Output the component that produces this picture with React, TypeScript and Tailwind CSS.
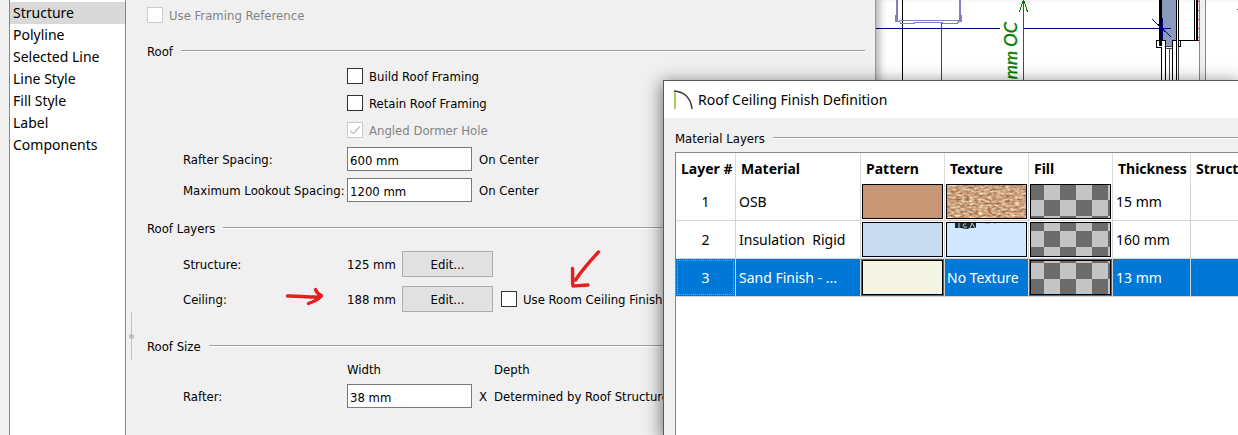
import { useState } from 'react'
import type { ReactNode } from 'react'

const panels = ['Structure', 'Polyline', 'Selected Line', 'Line Style', 'Fill Style', 'Label', 'Components']

const layers = [
  { id: 1, material: 'OSB', color: '#c79675', texture: 'osb', thickness: '15 mm', fill: 0 },
  { id: 2, material: 'Insulation  Rigid', color: '#c8dcf0', texture: 'rigid', thickness: '160 mm', fill: 1 },
  { id: 3, material: 'Sand Finish - ...', color: '#f5f5e6', texture: null, thickness: '13 mm', fill: 2 },
]

function Section({ title }: { title: string }) {
  return (
    <div className="flex h-4 items-center gap-2">
      <h2 className="pt-0.5 leading-4 whitespace-nowrap">{title}</h2>
      <div className="h-[2px] flex-1 border-t border-[#a0a0a0] bg-white" />
    </div>
  )
}

function Check({ label, checked = false, disabled = false }: { label: string; checked?: boolean; disabled?: boolean }) {
  const [on, setOn] = useState(checked)
  return (
    <label className={disabled ? 'flex h-4 items-center gap-[6px] text-[#838383]' : 'flex h-4 items-center gap-[6px]'}>
      <span className="grid size-4 shrink-0">
        <input
          type="checkbox"
          checked={on}
          disabled={disabled}
          onChange={(e) => setOn(e.target.checked)}
          className="col-start-1 row-start-1 size-4 appearance-none border border-[#333] bg-white disabled:border-[#ccc]"
        />
        {on && (
          <svg viewBox="0 0 16 16" className="pointer-events-none col-start-1 row-start-1 size-4" fill="none" stroke="#c4c4c4" strokeWidth="1.5">
            <path d="M3 8.5 6.3 11.5 13 4.5" />
          </svg>
        )}
      </span>
      <span className="pt-0.5 leading-4 whitespace-nowrap">{label}</span>
    </label>
  )
}

function Field({ id, value }: { id: string; value: string }) {
  return <input id={id} type="text" defaultValue={value} className="h-6 w-[125px] shrink-0 border border-[#7a7a7a] bg-white px-[2px] pt-0.5" />
}

function EditButton({ label }: { label: string }) {
  return (
    <button aria-label={label} className="h-[26px] w-[91px] shrink-0 border border-[#adadad] bg-[#e1e1e1] pt-0.5">
      Edit...
    </button>
  )
}

function Row({ children }: { children: ReactNode }) {
  return <div className="grid grid-cols-[164px_1fr] items-center pl-9 whitespace-nowrap">{children}</div>
}

// Hand drawn markup arrows over the form
function ArrowRight() {
  return (
    <svg className="absolute top-[286px] left-[285px] h-5 w-10" viewBox="0 0 40 20" fill="none" stroke="#e81e1e" strokeWidth="3.4" strokeLinecap="round" strokeLinejoin="round">
      <path d="M2.500 10C13 9.500 22 11.500 35 11M30.500 3.500C31.500 6.500 34 8.500 36.500 9.500C36 12 28 16 23.500 17.500" />
    </svg>
  )
}

function ArrowDown() {
  return (
    <svg className="absolute top-[248px] left-[568px] h-10 w-9" viewBox="0 0 36 40" fill="none" stroke="#e81e1e" strokeWidth="3.4" strokeLinecap="round" strokeLinejoin="round">
      <path d="M30.500 4C24 11 14 22 7.500 32M4.500 20.500C5 26 4 32 5 38C9 38 14 37 20 37" />
    </svg>
  )
}

function Plan() {
  return (
    <svg className="block h-[81px] w-[362px]" viewBox="1 0 362 81" fill="none" shapeRendering="crispEdges">
      <path d="M27.500 0V81" stroke="#000" />
      <path d="M66.500 22V81" stroke="#444" />
      <path d="M22 0V21M85 0V21" stroke="#8080c0" strokeWidth="2" />
      <path d="M20.500 15V21.500H24.500L26 23.500H39L40 22.500H67L68 23.500H82L84 21.500H86.500V15M24 20.500H84" stroke="#8080c0" />
      <path d="M1 28.500H125M149 28.500H296" stroke="#000080" />
      <path d="M148.500 0V81M148 1 144.500 12M149 1 152.500 12" stroke="#008000" />
      <text x="142" y="22" textAnchor="end" transform="rotate(-90 142 22)" fill="#008000" stroke="#008000" strokeWidth="0.4" className="font-['Lato'] text-lg italic">
        mm OC
      </text>
      <path d="M287 0H301V46H287Z" fill="#8a9cb9" />
      <path d="M285.500 0V46" stroke="#000" strokeWidth="3" />
      <path d="M301.500 0V46M303.500 0V46" stroke="#000" />
      <path d="M287.500 18V40M277 19 296 37M287 28.500H296" stroke="#000080" />
      <path d="M287 40.500H281.500V47.500H286.500M303 40.500H324M305.500 41V46.500H303" stroke="#000" />
      <path d="M287 41H291V81H287ZM298 41H301V81H298Z" fill="#fff" />
      <path d="M286.500 47V81M290.500 41V81M297.500 41V81M301.500 41V81M287 40.500H291M297 40.500H302" stroke="#000" />
      <path d="M291 46.500H297M291 48.500H297M294.500 49V81M303.500 47V81" stroke="#444" />
      <path d="M319.500 0V40" stroke="#000" />
      <path d="M322 0V40" stroke="#000" strokeWidth="2" />
      <path d="M323.500 1V40" stroke="#f00" strokeDasharray="1 8" />
      <path d="M324 0H331V81H324Z" fill="#f0f0f0" />
      <path d="M324.500 0V81M330.500 0V81" stroke="#828790" />
      <path d="M362 9H363" stroke="#555" />
    </svg>
  )
}

function Logo() {
  return (
    <svg className="h-5 w-[19px]" viewBox="0 0 19 20" fill="none">
      <path d="M1 2V19" stroke="#a9cf5a" strokeWidth="2" />
      <path d="M0 1C10 1.500 17 8 18 19" stroke="#3c3c3c" strokeWidth="1.500" />
    </svg>
  )
}

function OsbTexture() {
  return (
    <svg className="block h-[33px] w-full">
      <filter id="osb" x="0" y="0" width="100%" height="100%" colorInterpolationFilters="sRGB">
        <feTurbulence type="fractalNoise" baseFrequency="0.22 0.5" numOctaves="4" seed="8" />
        <feColorMatrix values="0.6 0 0 0 0.5  0.8 0.2 0 0 0.14  0.8 0.2 0 0 0  0 0 0 0 1" />
      </filter>
      <rect width="100%" height="100%" filter="url(#osb)" />
    </svg>
  )
}

function RigidTexture() {
  return (
    <svg className="block h-[33px] w-full bg-[#d2e8ff]" viewBox="0 0 79 33" preserveAspectRatio="xMinYMin slice">
      <path d="M8 0H29V5H23L20 6 14 5H8Z" fill="#20282f" />
      <path d="M12 0V5M19 1C15 0 15 5 20 4M23 5 25 0 28 5" stroke="#b9cee4" fill="none" />
      <path d="M38 .5H43M47 .5H49M57 .5H58" stroke="#a7bace" />
    </svg>
  )
}

// Transparency checkerboard, each row starts at another point of the pattern
function Checker({ shift }: { shift: number }) {
  const top = [-1, -8, -14][shift]
  const cells = []
  for (let r = 0; r < 4; r++) {
    for (let c = 0; c < 6; c++) {
      if ((r + c) % 2 === 0) {
        cells.push(<rect key={`${r}-${c}`} x={c * 16 - 3} y={r * 16 + top} width="16" height="16" fill="#6b6b6b" />)
      }
    }
  }
  return (
    <svg className="block h-[33px] w-full bg-[#c3c4c6]" viewBox="0 0 79 33" preserveAspectRatio="xMinYMin slice" shapeRendering="crispEdges">
      {cells}
    </svg>
  )
}

function LayerTable() {
  const [selected, setSelected] = useState(3)
  const head = 'h-[30px] border-r border-[#dcdcdc] px-[5px] pt-0.5 text-left font-bold whitespace-nowrap'
  const cell = 'h-[38px] border-r border-b border-[#d4d4d4] whitespace-pre'
  return (
    <table className="w-[660px] table-fixed border-separate border-spacing-0 font-['Noto_Sans'] text-sm">
      <colgroup>
        <col className="w-[60px]" />
        <col className="w-[125px]" />
        <col className="w-[84px]" />
        <col className="w-[84px]" />
        <col className="w-[84px]" />
        <col className="w-[78px]" />
        <col />
      </colgroup>
      <thead>
        <tr>
          {['Layer #', 'Material', 'Pattern', 'Texture', 'Fill', 'Thickness', 'Structure'].map((h) => (
            <th key={h} scope="col" className={head}>{h}</th>
          ))}
        </tr>
      </thead>
      <tbody>
        {layers.map((l) => (
          <tr key={l.id} onClick={() => setSelected(l.id)} className={l.id === selected ? 'bg-[#0078d7] text-white' : ''}>
            <td className={`${cell} p-px`}>
              <div className={l.id === selected ? 'flex h-[35px] items-center justify-center border border-dotted border-[#ff8728]' : 'flex h-[35px] items-center justify-center'}>{l.id}</div>
            </td>
            <td className={`${cell} px-[3px]`}>{l.material}</td>
            <td className={`${cell} p-px`}>
              <div className="h-[35px] border border-black" style={{ backgroundColor: l.color }} />
            </td>
            <td className={`${cell} p-px`}>
              {l.texture ? (
                <div className="h-[35px] overflow-hidden border border-black">
                  {l.texture === 'osb' ? <OsbTexture /> : <RigidTexture />}
                </div>
              ) : (
                <span className="pl-px">No Texture</span>
              )}
            </td>
            <td className={`${cell} p-px`}>
              <div className="h-[35px] overflow-hidden border border-black">
                <Checker shift={l.fill} />
              </div>
            </td>
            <td className={`${cell} px-[3px]`}>{l.thickness}</td>
            <td className={cell} />
          </tr>
        ))}
      </tbody>
    </table>
  )
}

export default function App() {
  const [panel, setPanel] = useState('Structure')

  return (
    <div className="relative flex h-screen overflow-hidden bg-[#f0f0f0] font-['DejaVu_Sans_Condensed','DejaVu_Sans',sans-serif] text-[13px] leading-4 text-black">
      {/* Panel list */}
      <nav className="ml-[9px] w-[117px] shrink-0 border-x border-[#828790] bg-white pt-[2px] font-['Noto_Sans'] text-sm">
        {panels.map((p) => (
          <button
            key={p}
            onClick={() => setPanel(p)}
            className={p === panel ? 'block h-[22px] w-full bg-[#d9d9d9] px-[3px] text-left leading-[22px]' : 'block h-[22px] w-full px-[3px] text-left leading-[22px]'}
          >
            {p}
          </button>
        ))}
      </nav>

      {/* Splitter handle */}
      <div className="flex w-[11px] shrink-0 flex-col items-center pt-[312px]">
        <div className="flex h-12 w-px items-center justify-center bg-[#c0c0c0]">
          <div className="size-[5px] shrink-0 rounded-full bg-[#c0c0c0]" />
        </div>
      </div>

      {/* Roof settings */}
      <main className="w-[738px] shrink-0 pt-[7px] pr-[10px] pl-[10px]">
        <Check label="Use Framing Reference" disabled />
        <div className="pt-5">
          <Section title="Roof" />
        </div>
        <div className="flex flex-col gap-[11px] pt-[9px] pl-[200px]">
          <Check label="Build Roof Framing" />
          <Check label="Retain Roof Framing" />
          <Check label="Angled Dormer Hole" checked disabled />
        </div>
        <div className="flex flex-col gap-[7px] pt-[9px]">
          <Row>
            <label htmlFor="rafter-spacing" className="pt-0.5">Rafter Spacing:</label>
            <div className="flex items-center gap-[7px]">
              <Field id="rafter-spacing" value="600 mm" />
              <span className="pt-0.5">On Center</span>
            </div>
          </Row>
          <Row>
            <label htmlFor="lookout-spacing" className="pt-0.5">Maximum Lookout Spacing:</label>
            <div className="flex items-center gap-[7px]">
              <Field id="lookout-spacing" value="1200 mm" />
              <span className="pt-0.5">On Center</span>
            </div>
          </Row>
        </div>
        <div className="pt-[18px]">
          <Section title="Roof Layers" />
        </div>
        <div className="flex flex-col gap-[9px] pt-[15px]">
          <Row>
            <span className="pt-0.5">Structure:</span>
            <div className="flex items-center">
              <span className="w-[55px] pt-0.5">125 mm</span>
              <EditButton label="Edit structure" />
            </div>
          </Row>
          <Row>
            <span className="pt-0.5">Ceiling:</span>
            <div className="flex items-center">
              <span className="w-[55px] pt-0.5">188 mm</span>
              <EditButton label="Edit ceiling" />
              <div className="pl-2">
                <Check label="Use Room Ceiling Finish" />
              </div>
            </div>
          </Row>
        </div>
        <div className="pt-[26px]">
          <Section title="Roof Size" />
        </div>
        <div className="flex flex-col gap-[6px] pt-2">
          <Row>
            <span />
            <div className="flex">
              <span className="w-[147px]">Width</span>
              <span>Depth</span>
            </div>
          </Row>
          <Row>
            <label htmlFor="rafter-width" className="pt-0.5">Rafter:</label>
            <div className="flex items-center">
              <Field id="rafter-width" value="38 mm" />
              <span className="w-[22px] pt-0.5 pl-[7px]">X</span>
              <span className="pt-0.5">Determined by Roof Structure</span>
            </div>
          </Row>
        </div>
      </main>

      {/* Floor plan behind the dialogs */}
      <div className="flex-1 overflow-hidden border-l border-[#999] bg-white shadow-[inset_8px_0_8px_-5px_#00000055]">
        <Plan />
      </div>

      <ArrowRight />
      <ArrowDown />

      {/* Roof Ceiling Finish Definition */}
      <section className="absolute inset-y-0 top-20 right-0 left-[663px] overflow-hidden border-t border-l border-[#5a5a5a] bg-[#f0f0f0] shadow-[0_4px_16px_2px_#00000080]">
        <header className="flex h-[37px] items-center gap-[5px] bg-white pl-[10px]">
          <Logo />
          <h1 className="font-['Noto_Sans'] text-sm">Roof Ceiling Finish Definition</h1>
        </header>
        <div className="pt-3 pl-[11px]">
          <Section title="Material Layers" />
          <div className="mt-[6px] h-[300px] overflow-hidden border-t border-l border-[#828790] bg-white">
            <LayerTable />
          </div>
        </div>
      </section>
    </div>
  )
}
